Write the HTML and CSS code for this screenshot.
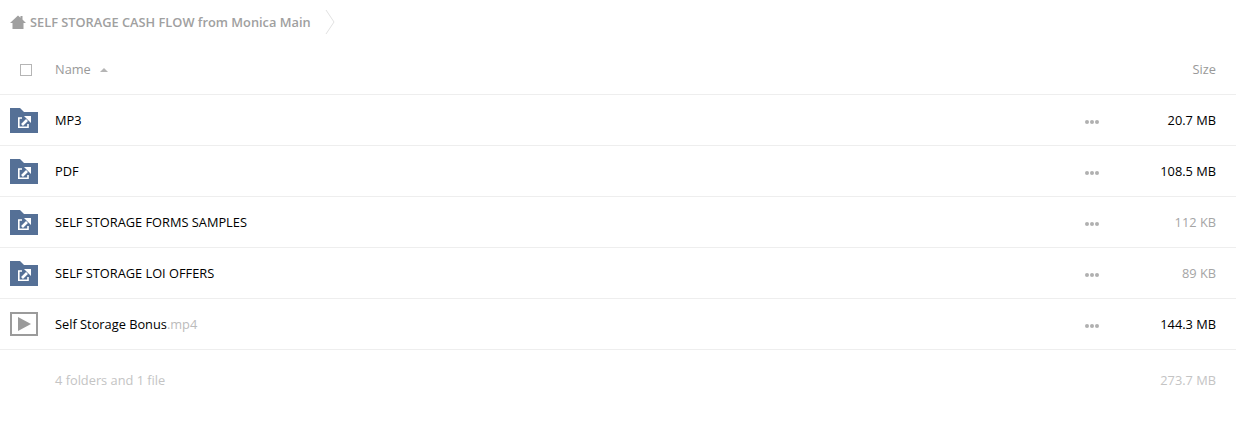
FILE: index.html
```html
<!DOCTYPE html>
<html>
<head>
  <title>SELF STORAGE CASH FLOW from Monica Main</title>
  <link rel="stylesheet" href="styles.css">
</head>
<body>
  <div class="breadcrumb">
    <svg class="home-icon" width="16" height="14" viewBox="0 0 16 14">
      <path d="M8 0.5 L10.5 2.8 V1 H12.5 V4.6 L16 8 H13.5 V14 H2.5 V8 H0 Z" fill="#a0a0a0"/>
    </svg>
    <span class="crumb-title">SELF STORAGE CASH FLOW from Monica Main</span>
    <svg class="crumb-arrow" width="10" height="26" viewBox="0 0 10 26">
      <path d="M1 1 L9 13 L1 25" fill="none" stroke="#e2e2e2"/>
    </svg>
  </div>

  <div class="row header-row">
    <div class="cell-icon"><span class="checkbox"></span></div>
    <div class="cell-name name-head">Name <span class="sort-arrow"></span></div>
    <div class="cell-size">Size</div>
  </div>

  <div class="row">
    <div class="cell-icon">
      <svg class="folder" width="28" height="25" viewBox="0 0 28 25"><use href="#shared-folder"/></svg>
    </div>
    <div class="cell-name">MP3</div>
    <div class="dots"><i></i><i></i><i></i></div>
    <div class="cell-size">20.7 MB</div>
  </div>

  <div class="row">
    <div class="cell-icon">
      <svg class="folder" width="28" height="25" viewBox="0 0 28 25"><use href="#shared-folder"/></svg>
    </div>
    <div class="cell-name">PDF</div>
    <div class="dots"><i></i><i></i><i></i></div>
    <div class="cell-size">108.5 MB</div>
  </div>

  <div class="row">
    <div class="cell-icon">
      <svg class="folder" width="28" height="25" viewBox="0 0 28 25"><use href="#shared-folder"/></svg>
    </div>
    <div class="cell-name">SELF STORAGE FORMS SAMPLES</div>
    <div class="dots"><i></i><i></i><i></i></div>
    <div class="cell-size muted">112 KB</div>
  </div>

  <div class="row">
    <div class="cell-icon">
      <svg class="folder" width="28" height="25" viewBox="0 0 28 25"><use href="#shared-folder"/></svg>
    </div>
    <div class="cell-name">SELF STORAGE LOI OFFERS</div>
    <div class="dots"><i></i><i></i><i></i></div>
    <div class="cell-size muted">89 KB</div>
  </div>

  <div class="row">
    <div class="cell-icon">
      <svg class="video" width="28" height="24" viewBox="0 0 28 24">
        <rect x="1" y="1" width="26" height="22" fill="none" stroke="#9b9b9b" stroke-width="2"/>
        <path d="M8 5 L21 12 L8 19 Z" fill="#9b9b9b"/>
      </svg>
    </div>
    <div class="cell-name">Self Storage Bonus<span class="ext">.mp4</span></div>
    <div class="dots"><i></i><i></i><i></i></div>
    <div class="cell-size">144.3 MB</div>
  </div>

  <div class="row footer-row">
    <div class="cell-icon"></div>
    <div class="cell-name">4 folders and 1 file</div>
    <div class="cell-size">273.7 MB</div>
  </div>

  <svg class="defs" width="0" height="0">
    <symbol id="shared-folder" viewBox="0 0 28 25">
      <path d="M0 0 H10 L14 4 H28 V25 H0 Z" fill="#557096"/>
      <path d="M12 10 H8.8 V19.2 H18 V16" fill="none" stroke="#fff" stroke-width="1.6"/>
      <path d="M12 17 L17 12" fill="none" stroke="#fff" stroke-width="2.6"/>
      <path d="M14 8 H21 V15 Z" fill="#fff"/>
    </symbol>
  </svg>
</body>
</html>
```

FILE: styles.css
```css
body {
  font-family: "Open Sans", sans-serif;
  font-size: 12.8px;
  color: #000000;
  background-color: #ffffff;
  margin: 0;
}

.breadcrumb {
  display: flex;
  align-items: center;
  height: 44px;
  padding-left: 10px;
}

.home-icon {
  margin-right: 4px;
}

.crumb-title {
  font-size: 12.8px;
  font-weight: 600;
  color: #a0a0a0;
}

.crumb-arrow {
  margin-left: 14px;
}

.row {
  display: flex;
  align-items: center;
  height: 50px;
  border-bottom: 1px solid #eeeeee;
  padding-right: 20px;
}

.header-row {
  color: #999999;
}

.footer-row {
  border-bottom: none;
  height: 60px;
  color: #c4c4c4;
}

.cell-icon {
  width: 55px;
  padding-left: 10px;
  box-sizing: border-box;
  display: flex;
  flex-shrink: 0;
}

.checkbox {
  width: 10px;
  height: 10px;
  margin-left: 10px;
  margin-top: 1px;
  border: 1px solid #b5b5b5;
}

.cell-name {
  flex: 1;
}

.sort-arrow {
  display: inline-block;
  margin-left: 6px;
  vertical-align: 2px;
  border-left: 4px solid transparent;
  border-right: 4px solid transparent;
  border-bottom: 4px solid #b5b5b5;
}

.ext {
  color: #bbbbbb;
}

.dots {
  display: flex;
  gap: 1px;
  margin-right: 45px;
  padding-top: 3px;
}

.dots i {
  width: 4px;
  height: 4px;
  border-radius: 50%;
  background-color: #b0b0b0;
}

.cell-size {
  width: 72px;
  text-align: right;
}

.header-row .cell-size {
  color: #999999;
}

.footer-row .cell-size {
  color: #c4c4c4;
}

.muted {
  color: #a5a5a5;
}

.defs {
  position: absolute;
}
```
